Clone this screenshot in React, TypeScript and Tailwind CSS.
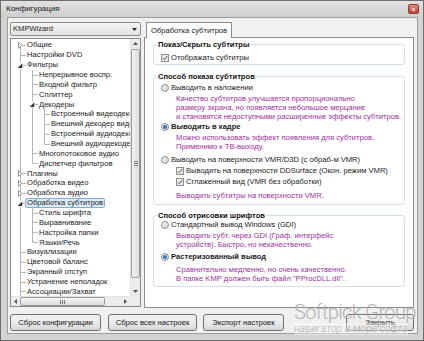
import React from 'react';

type Guide = 'pipe' | 'tee' | 'first' | 'last';
type Exp = 'none' | 'open' | 'closed';

interface TreeRow {
    label: string;
    guides: Guide[];
    exp?: Exp;
    selected?: boolean;
}

const treeRows: TreeRow[] = [
    { label: 'Общие', guides: ['first'], exp: 'closed' },
    { label: 'Настройки DVD', guides: ['tee'] },
    { label: 'Фильтры', guides: ['tee'], exp: 'open' },
    { label: 'Непрерывное воспр.', guides: ['pipe', 'tee'] },
    { label: 'Входной фильтр', guides: ['pipe', 'tee'] },
    { label: 'Сплиттер', guides: ['pipe', 'tee'] },
    { label: 'Декодеры', guides: ['pipe', 'tee'], exp: 'open' },
    { label: 'Встроенный видеодекодер', guides: ['pipe', 'pipe', 'tee'] },
    { label: 'Внешний декодер видео', guides: ['pipe', 'pipe', 'tee'] },
    { label: 'Встроенный аудиодекодер', guides: ['pipe', 'pipe', 'tee'] },
    { label: 'Внешний аудиодекодер', guides: ['pipe', 'pipe', 'last'] },
    { label: 'Многопотоковое аудио', guides: ['pipe', 'tee'] },
    { label: 'Диспетчер фильтров', guides: ['pipe', 'last'] },
    { label: 'Плагины', guides: ['tee'], exp: 'closed' },
    { label: 'Обработка видео', guides: ['tee'], exp: 'closed' },
    { label: 'Обработка аудио', guides: ['tee'], exp: 'closed' },
    { label: 'Обработка субтитров', guides: ['tee'], exp: 'open', selected: true },
    { label: 'Стиль шрифта', guides: ['pipe', 'tee'] },
    { label: 'Выравнивание', guides: ['pipe', 'tee'] },
    { label: 'Настройка папки', guides: ['pipe', 'tee'] },
    { label: 'Языки/Речь', guides: ['pipe', 'last'] },
    { label: 'Визуализации', guides: ['tee'] },
    { label: 'Цветовой баланс', guides: ['tee'] },
    { label: 'Экранный отступ', guides: ['tee'] },
    { label: 'Устранение неполадок', guides: ['tee'] },
    { label: 'Ассоциации/Захват', guides: ['tee'] },
];

// одна клетка с линиями дерева
const GuideCell: React.FC<{ g: Guide; exp?: Exp }> = ({ g, exp }) => (
    <svg width="12" height="10" viewBox="0 0 12 10" preserveAspectRatio="none" className="shrink-0 h-full">
        <g stroke="#b4b4b4" strokeWidth="1">
            {(g === 'pipe' || g === 'tee') && <line x1="6.5" y1="0" x2="6.5" y2="10" />}
            {g === 'first' && <line x1="6.5" y1="5" x2="6.5" y2="10" />}
            {g === 'last' && <line x1="6.5" y1="0" x2="6.5" y2="5.5" />}
            {g !== 'pipe' && <line x1="6.5" y1="5.5" x2="12" y2="5.5" />}
        </g>
        {exp === 'closed' && <path d="M4.5 2.5 L7.8 5.5 L4.5 8.5 Z" fill="#ffffff" stroke="#8a8a8a" strokeWidth="0.9" />}
        {exp === 'open' && (
            <>
                <rect x="3" y="2.5" width="6" height="6" fill="#ffffff" />
                <path d="M8.3 3.2 L8.3 8 L3.6 8 Z" fill="#3a3a3a" />
            </>
        )}
    </svg>
);

const Radio: React.FC<{ on?: boolean }> = ({ on }) => (
    <span className="w-[8px] h-[8px] rounded-full border border-[#8e8f8f] bg-gradient-to-br from-[#f4f4f4] to-[#d4d4d4] flex items-center justify-center shrink-0 mr-[2px]">
        {on && <span className="w-[4px] h-[4px] rounded-full bg-[#2f74c0]" />}
    </span>
);

const Check: React.FC = () => (
    <span className="w-[8px] h-[8px] border border-[#8e8f8f] bg-gradient-to-br from-[#f8f8f8] to-[#dedede] flex items-center justify-center shrink-0 mr-[2px]">
        <svg viewBox="0 0 8 8" className="w-[6px] h-[6px]">
            <path d="M1 4.2 L3 6.3 L7 1.2" stroke="#4b5a74" strokeWidth="1.3" fill="none" />
        </svg>
    </span>
);

const Group: React.FC<{ title: string; className: string; children: React.ReactNode }> = ({ title, className, children }) => (
    <fieldset className={`border border-[#d5dfe5] rounded-[3px] mx-[8px] px-0 ${className}`}>
        <legend className="ml-[3px] px-[1px] font-bold leading-[9px] text-[#111]">{title}</legend>
        <div className="pl-[7px]">{children}</div>
    </fieldset>
);

const Note: React.FC<{ lines: string[]; className: string }> = ({ lines, className }) => (
    <div className={`pl-[15px] text-[#9c2f9a] ${className}`}>
        {lines.map((l) => (
            <div key={l} className="h-[9px] leading-[9px] whitespace-nowrap">{l}</div>
        ))}
    </div>
);

const Btn: React.FC<{ label: string; className: string }> = ({ label, className }) => (
    <div className={`h-[17px] rounded-[3px] border border-[#707070] bg-gradient-to-b from-[#f2f2f2] via-[#ebebeb] to-[#d6d6d6] flex items-center justify-center text-[#111] ${className}`}>
        {label}
    </div>
);

export default function App() {
    return (
        <div
            className="relative w-[424px] h-[341px] overflow-hidden bg-[#d3d3d3] border border-[#6e6e6e] flex flex-col text-[7.6px] text-[#1b1b1b]"
            style={{ fontFamily: '"Liberation Sans", Arial, sans-serif' }}
        >
            {/* заголовок окна */}
            <div className="h-[16px] shrink-0 flex items-center justify-between pl-[5px] pr-[4px] bg-gradient-to-b from-[#e2e2e2] to-[#cfcfcf]">
                <span className="text-[8px] text-[#1a1a1a]">Конфигурация</span>
                <div className="w-[11px] h-[10px] rounded-[2px] border border-[#8a3a30] bg-gradient-to-b from-[#e08a7c] to-[#b8463a] flex items-center justify-center">
                    <span className="text-[6px] leading-none text-white font-bold">x</span>
                </div>
            </div>

            {/* клиентская область */}
            <div className="ml-[6px] mr-[5px] h-[317px] shrink-0 border border-[#9c9c9c] bg-[#f0f0f0] flex flex-col pl-[2px] pt-[4px]">
                <div className="flex gap-[3px]">
                    {/* левая колонка */}
                    <div className="w-[131px] flex flex-col gap-[2px]">
                        <div className="h-[14px] rounded-[2px] border border-[#8b8b8b] bg-gradient-to-b from-[#f6f6f6] to-[#e2e2e2] flex items-center justify-between pl-[2px] pr-[3px]">
                            <span>KMPWizard</span>
                            <svg width="5" height="3" viewBox="0 0 5 3"><path d="M0 0 L5 0 L2.5 3 Z" fill="#222" /></svg>
                        </div>
                        <div className="h-[269px] border border-[#828790] bg-white grid grid-cols-[119px_10px] grid-rows-[257px_10px] overflow-hidden">
                            <div className="pt-[1px] pl-[3px] overflow-hidden">
                                {treeRows.map((r) => (
                                    <div key={r.label} className="h-[9.87px] flex items-center">
                                        {r.guides.map((g, i) => (
                                            <GuideCell key={i} g={g} exp={i === r.guides.length - 1 ? r.exp : 'none'} />
                                        ))}
                                        <span
                                            className={
                                                r.selected
                                                    ? 'shrink-0 ml-[-1px] px-[1px] leading-[8px] whitespace-nowrap rounded-[2px] border border-[#84acdd] bg-[#dcebfc]'
                                                    : 'shrink-0 ml-[1px] leading-[9px] whitespace-nowrap'
                                            }
                                        >
                                            {r.label}
                                        </span>
                                    </div>
                                ))}
                            </div>
                            {/* вертикальная прокрутка */}
                            <div className="bg-[#ececec] border-l border-[#e2e2e2] flex flex-col items-center">
                                <div className="h-[9px] flex items-center justify-center">
                                    <svg width="5" height="3" viewBox="0 0 5 3"><path d="M0 3 L5 3 L2.5 0 Z" fill="#555" /></svg>
                                </div>
                                <div className="mt-[1px] w-[9px] h-[229px] rounded-[2px] border border-[#9b9b9b] bg-gradient-to-r from-[#f4f4f4] to-[#dcdcdc] flex items-center justify-center">
                                    <div className="flex flex-col gap-[1px]">
                                        <span className="w-[4px] h-px bg-[#777]" />
                                        <span className="w-[4px] h-px bg-[#777]" />
                                        <span className="w-[4px] h-px bg-[#777]" />
                                    </div>
                                </div>
                                <div className="flex-1" />
                                <div className="h-[9px] flex items-center justify-center">
                                    <svg width="5" height="3" viewBox="0 0 5 3"><path d="M0 0 L5 0 L2.5 3 Z" fill="#555" /></svg>
                                </div>
                            </div>
                            {/* горизонтальная прокрутка */}
                            <div className="bg-[#ececec] border-t border-[#e2e2e2] flex items-center">
                                <div className="w-[9px] flex items-center justify-center">
                                    <svg width="3" height="5" viewBox="0 0 3 5"><path d="M3 0 L3 5 L0 2.5 Z" fill="#555" /></svg>
                                </div>
                                <div className="w-[85px] h-[9px] rounded-[2px] border border-[#9b9b9b] bg-gradient-to-b from-[#f4f4f4] to-[#dcdcdc] flex items-center justify-center">
                                    <div className="flex gap-[1px]">
                                        <span className="w-px h-[4px] bg-[#777]" />
                                        <span className="w-px h-[4px] bg-[#777]" />
                                        <span className="w-px h-[4px] bg-[#777]" />
                                    </div>
                                </div>
                                <div className="flex-1" />
                                <div className="w-[9px] flex items-center justify-center">
                                    <svg width="3" height="5" viewBox="0 0 3 5"><path d="M0 0 L0 5 L3 2.5 Z" fill="#555" /></svg>
                                </div>
                            </div>
                            <div className="bg-[#ececec]" />
                        </div>
                    </div>

                    {/* правая колонка */}
                    <div className="w-[270px] flex flex-col">
                        <div className="flex pl-[2px]">
                            <div className="relative z-10 -mb-px h-[16px] px-[4px] border border-b-0 border-[#898c95] bg-white flex items-center">
                                Обработка субтитров
                            </div>
                        </div>
                        <div className="h-[271px] border border-[#898c95] bg-white flex flex-col pt-[2px]">
                            <Group title="Показ/Скрыть субтитры" className="">
                                <div className="mt-[4px] mb-[2px] h-[9px] flex items-center">
                                    <Check />
                                    <span>Отображать субтитры</span>
                                </div>
                            </Group>

                            <Group title="Способ показа субтитров" className="mt-[7px]">
                                <div className="pb-[3.5px]">
                                    <div className="mt-[2px] h-[9px] flex items-center">
                                        <Radio />
                                        <span>Выводить в наложении</span>
                                    </div>
                                    <Note
                                        className="mt-[2px]"
                                        lines={[
                                            'Качество субтитров улучшается пропорционально',
                                            'размеру экрана, но появляется небольшое мерцание',
                                            'и становятся недоступными расширенные эффекты субтитров.',
                                        ]}
                                    />
                                    <div className="mt-[1px] h-[9px] flex items-center">
                                        <Radio on />
                                        <span className="font-bold">Выводить в кадре</span>
                                    </div>
                                    <Note
                                        className="mt-[2px]"
                                        lines={['Можно использовать эффект появления для субтитров.', 'Применимо к ТВ-выходу.']}
                                    />
                                    <div className="mt-[4px] h-[9px] flex items-center">
                                        <Radio />
                                        <span>Выводить на поверхности VMR/D3D (с обраб-м VMR)</span>
                                    </div>
                                    <div className="mt-[2.5px] pl-[15px] h-[9px] flex items-center">
                                        <Check />
                                        <span>Выводить на поверхности DDSurface (Окон. режим VMR)</span>
                                    </div>
                                    <div className="mt-[1.5px] pl-[15px] h-[9px] flex items-center">
                                        <Check />
                                        <span>Сглаженный вид (VMR без обработки)</span>
                                    </div>
                                    <Note className="mt-[5px]" lines={['Выводить субтитры на поверхности VMR.']} />
                                </div>
                            </Group>

                            <Group title="Способ отрисовки шрифтов" className="mt-[6px]">
                                <div className="pb-[3px]">
                                    <div className="mt-[1px] h-[9px] flex items-center">
                                        <Radio />
                                        <span>Стандартный вывод Windows (GDI)</span>
                                    </div>
                                    <Note
                                        className="mt-[1.5px]"
                                        lines={['Выводить субт. через GDI (Граф. интерфейс', 'устройств). Быстро, но некачественно.']}
                                    />
                                    <div className="mt-[3.5px] h-[9px] flex items-center">
                                        <Radio on />
                                        <span className="font-bold">Растеризованный вывод</span>
                                    </div>
                                    <Note
                                        className="mt-[3px]"
                                        lines={['Сравнительно медленно, но очень качественно.', 'В папке KMP должен быть файл "PProcDLL.dll".']}
                                    />
                                </div>
                            </Group>
                        </div>
                    </div>
                </div>

                {/* кнопки */}
                <div className="mt-[6px] flex">
                    <Btn label="Сброс конфигурации" className="w-[91px]" />
                    <Btn label="Сброс всех настроек" className="ml-[7px] w-[89px]" />
                    <Btn label="Экспорт настроек" className="ml-[6px] w-[81px]" />
                    <Btn label="Закрыть" className="ml-auto mr-[3px] w-[68px]" />
                </div>
            </div>

            {/* водяной знак */}
            <div className="absolute left-[293px] top-[300px] flex flex-col items-start pointer-events-none whitespace-nowrap" style={{ fontFamily: 'Roboto, "Liberation Sans", sans-serif' }}>
                <span className="text-[20px] leading-[22px] font-light tracking-[-0.6px] text-[#a9a9a9]/90">Softpick Group</span>
                <span className="text-[10.5px] leading-[12px] italic font-light text-[#a9a9a9] bg-white/40">навигатор в море софта</span>
            </div>
        </div>
    );
}
